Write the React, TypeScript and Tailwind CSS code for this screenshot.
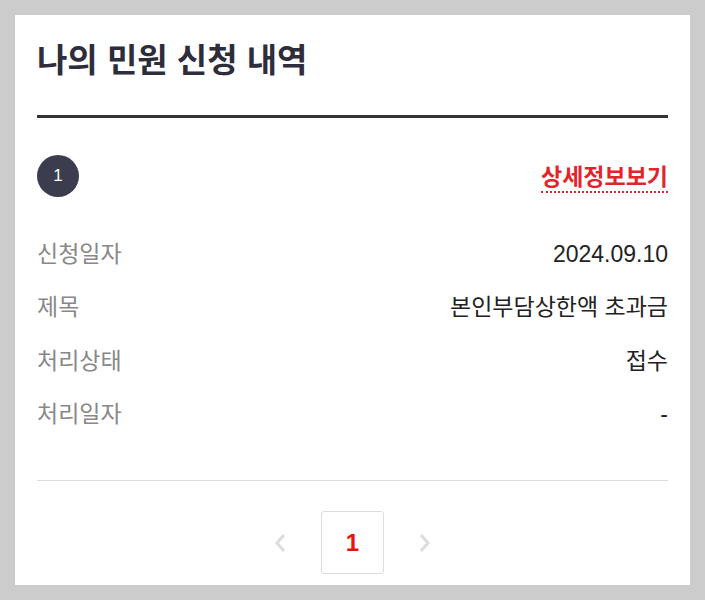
const rows = [
  { label: '신청일자', value: '2024.09.10' },
  { label: '제목', value: '본인부담상한액 초과금' },
  { label: '처리상태', value: '접수' },
  { label: '처리일자', value: '-' },
];

export default function App() {
  return (
    <div
      className="min-h-screen bg-[#cccccc] p-[15px]"
      style={{ fontFamily: '"Liberation Sans", "Noto Sans CJK KR", sans-serif' }}
    >
      <div className="bg-white px-[22px] pb-[11px]">
        {/* Header */}
        <h1 className="pt-[26px] pb-[34px] text-[33px] leading-[40px] font-bold text-[#2d2d3b]">
          나의 민원 신청 내역
        </h1>
        <div className="h-[3px] bg-[#333333]" />

        {/* Item */}
        <div className="mt-[37px] flex h-[42px] items-center justify-between">
          <span className="flex h-[42px] w-[42px] items-center justify-center rounded-full bg-[#3b3c4e] text-[17px] text-white">
            1
          </span>
          <a className="mt-[4px] border-b-2 border-dotted border-[#e0262d] pb-[1px] text-[23px] leading-[26px] font-bold text-[#e0262d]">
            상세정보보기
          </a>
        </div>

        <dl className="mt-[30px]">
          {rows.map((row) => (
            <div key={row.label} className="flex h-[53.5px] items-center justify-between">
              <dt className="text-[23px] text-[#888888]">{row.label}</dt>
              <dd className="text-[23px] text-[#222222]">{row.value}</dd>
            </div>
          ))}
        </dl>

        <div className="mt-[39px] h-px bg-[#dddddd]" />

        {/* Pagination */}
        <div className="mt-[30px] flex items-center justify-center gap-[30px]">
          <button className="flex h-[63px] w-[22px] items-center justify-center text-[#dddddd]">
            <svg width="12" height="20" viewBox="0 0 12 20" fill="none">
              <path d="M10 2 L3 10 L10 18" stroke="currentColor" strokeWidth="3" />
            </svg>
          </button>
          <span className="flex h-[63px] w-[63px] items-center justify-center rounded-[3px] border border-[#dddddd] text-[24px] font-bold text-[#ee1111]">
            1
          </span>
          <button className="flex h-[63px] w-[22px] items-center justify-center text-[#dddddd]">
            <svg width="12" height="20" viewBox="0 0 12 20" fill="none">
              <path d="M2 2 L9 10 L2 18" stroke="currentColor" strokeWidth="3" />
            </svg>
          </button>
        </div>
      </div>
    </div>
  );
}
